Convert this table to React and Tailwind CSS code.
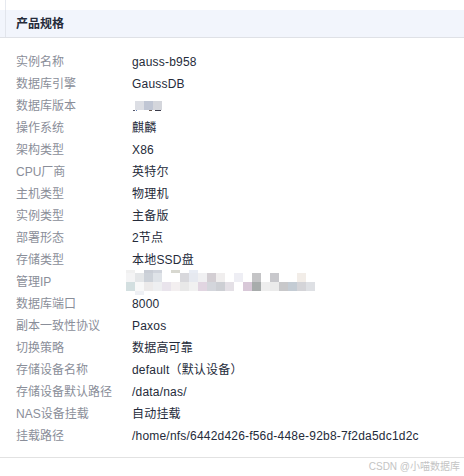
import React from "react";

const rows = [
  ["实例名称", "gauss-b958"],
  ["数据库引擎", "GaussDB"],
  ["数据库版本", "__VERSION__"],
  ["操作系统", "麒麟"],
  ["架构类型", "X86"],
  ["CPU厂商", "英特尔"],
  ["主机类型", "物理机"],
  ["实例类型", "主备版"],
  ["部署形态", "2节点"],
  ["存储类型", "本地SSD盘"],
  ["管理IP", "__IP__"],
  ["数据库端口", "8000"],
  ["副本一致性协议", "Paxos"],
  ["切换策略", "数据高可靠"],
  ["存储设备名称", "default（默认设备）"],
  ["存储设备默认路径", "/data/nas/"],
  ["NAS设备挂载", "自动挂载"],
  ["挂载路径", "/home/nfs/6442d426-f56d-448e-92b8-7f2da5dc1d2c"],
];

const ipRow0 = { 0: "#f0f0f0", 2: "#c9cdd5", 3: "#d0d4dc", 5: "#d8d8d0", 7: "#e8ecf4" };
const ipRow1 = ["#f4f4f5", "#e4e6e8", "#cdd2d9", "#dfe3e8", null, null, "#d8d8dc", "#e6e9f0", "#f0f0f2", "#d3ced3", "#f0eeee", null, "#eeeef4", null, "#c4c4c6", null, "#c8c8cc", null, null, "#f2ede8", null];
const ipRow2 = ["#d3dfe0", "#f8f8f8", "#eceaea", "#eeeff1", "#e9e4ec", "#f3eff0", "#e8e8e8", "#f1f1f1", "#e1d5e1", "#d4d6dc", "#cdcfd4", "#e4e0e6", null, "#d8c8d8", "#a8acac", "#eeeeee", "#ebebeb", "#c8c8ca", "#c4ccd4", "#d4d4d8", "#dee0e4"];

function IpMosaic() {
  const rects = [];
  Object.entries(ipRow0).forEach(([i, c]) => rects.push(<rect key={"a" + i} x={Number(i) * 9} y={0} width={9} height={3} fill={c} />));
  ipRow1.forEach((c, i) => c && rects.push(<rect key={"b" + i} x={i * 9} y={3} width={9} height={9} fill={c} />));
  ipRow2.forEach((c, i) => c && rects.push(<rect key={"c" + i} x={i * 9} y={12} width={9} height={9} fill={c} />));
  rects.push(<rect key="d" x={9} y={21} width={9} height={4} fill="#eef0f4" />);
  return (
    <svg width="189" height="25" viewBox="0 0 189 25" className="-ml-[6px] block" shapeRendering="crispEdges">
      {rects}
    </svg>
  );
}

function VersionMosaic() {
  return (
    <svg width="30" height="12" viewBox="0 0 30 12" className="block" shapeRendering="crispEdges">
      <rect x="3" y="1" width="9" height="9" fill="#dcdee4" />
      <rect x="12" y="1" width="9" height="9" fill="#c0c6d4" />
      <rect x="21" y="1" width="9" height="9" fill="#d4d6dc" />
      <rect x="1" y="10" width="2" height="1" fill="#555566" />
      <rect x="4" y="10" width="1" height="1" fill="#6a8ac0" />
      <rect x="17" y="10" width="3" height="1" fill="#6a5a50" />
      <rect x="23" y="10" width="6" height="1" fill="#3a3a4a" />
    </svg>
  );
}

export default function App() {
  return (
    <div
      className="w-[464px] h-[476px] bg-white flex flex-col text-[12px]"
      style={{ fontFamily: '"Liberation Sans", "Noto Sans CJK SC", sans-serif' }}
    >
      <div className="flex h-[10px]">
        <div className="w-[5px]" />
        <div className="w-px bg-[#e6e9ef]" />
        <div className="flex-1" />
      </div>
      <div className="flex h-[28px] bg-[#f2f5fc] border-b border-[#dfe1e6]">
        <div className="w-[5px]" />
        <div className="w-px bg-[#e2e5ec]" />
        <div className="flex-1 flex items-center pl-[10px] font-bold text-[#252b3a]">产品规格</div>
      </div>
      <div className="flex flex-col pt-[13px] pb-[10px] border-b border-[#e2e2e2]">
        {rows.map(([k, v]) => (
          <div key={k} className="flex h-[22px] items-center">
            <div className="w-[132px] pl-[16px] text-[#8a8e99] shrink-0">{k}</div>
            <div className="text-[#252b3a] whitespace-nowrap flex items-center tracking-[0.2px]">
              {v === "__IP__" ? <IpMosaic /> : v === "__VERSION__" ? <VersionMosaic /> : v}
            </div>
          </div>
        ))}
      </div>
      <div className="flex justify-end pr-[4px] pt-[2px] text-[10px] leading-[14px] text-[#c4c4c4]">
        CSDN @小喵数据库
      </div>
    </div>
  );
}
